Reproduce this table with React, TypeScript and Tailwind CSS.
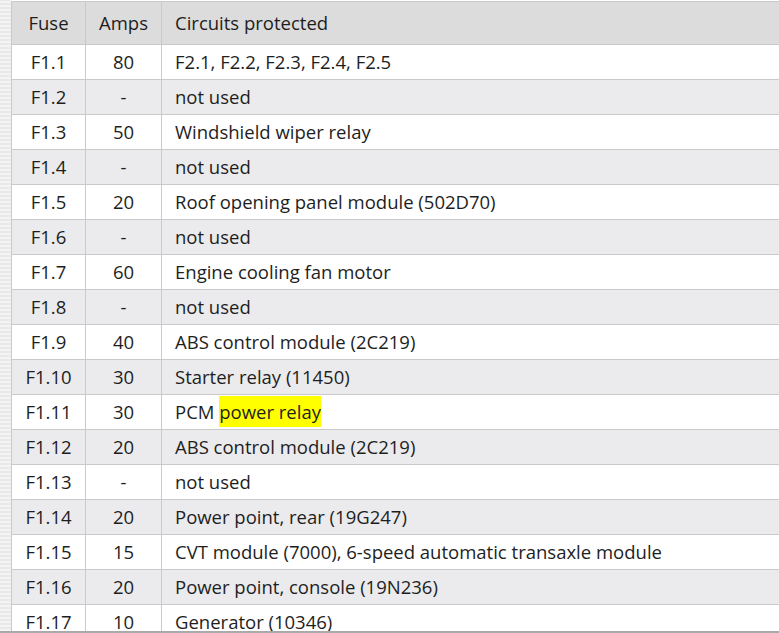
import React from 'react';

type Row = { fuse: string; amps: string; circuit: React.ReactNode };

const rows: Row[] = [
  { fuse: 'F1.1', amps: '80', circuit: 'F2.1, F2.2, F2.3, F2.4, F2.5' },
  { fuse: 'F1.2', amps: '-', circuit: 'not used' },
  { fuse: 'F1.3', amps: '50', circuit: 'Windshield wiper relay' },
  { fuse: 'F1.4', amps: '-', circuit: 'not used' },
  { fuse: 'F1.5', amps: '20', circuit: 'Roof opening panel module (502D70)' },
  { fuse: 'F1.6', amps: '-', circuit: 'not used' },
  { fuse: 'F1.7', amps: '60', circuit: 'Engine cooling fan motor' },
  { fuse: 'F1.8', amps: '-', circuit: 'not used' },
  { fuse: 'F1.9', amps: '40', circuit: 'ABS control module (2C219)' },
  { fuse: 'F1.10', amps: '30', circuit: 'Starter relay (11450)' },
  {
    fuse: 'F1.11',
    amps: '30',
    circuit: (
      <>
        PCM <span className="bg-[#ffff00] py-[3px]">power relay</span>
      </>
    ),
  },
  { fuse: 'F1.12', amps: '20', circuit: 'ABS control module (2C219)' },
  { fuse: 'F1.13', amps: '-', circuit: 'not used' },
  { fuse: 'F1.14', amps: '20', circuit: 'Power point, rear (19G247)' },
  { fuse: 'F1.15', amps: '15', circuit: 'CVT module (7000), 6-speed automatic transaxle module' },
  { fuse: 'F1.16', amps: '20', circuit: 'Power point, console (19N236)' },
  { fuse: 'F1.17', amps: '10', circuit: 'Generator (10346)' },
];

export default function App() {
  return (
    <div className="flex h-[633px] w-[779px] overflow-hidden border-b-2 border-[#a9a9a9] bg-white font-['Open_Sans',sans-serif] text-[18.5px] text-[#1e1e1e]">
      <div className="w-[11px] shrink-0 bg-[repeating-linear-gradient(0deg,#f4f4f4_0px,#f4f4f4_2px,#e9e9e9_2px,#e9e9e9_4px)]" />
      <div className="pt-px">
        <table className="w-[790px] border-collapse">
          <thead>
            <tr className="h-[43px] bg-[#dcdcdc]">
              <th className="w-[74px] border border-[#cacaca] text-center font-normal">Fuse</th>
              <th className="w-[76px] border border-[#cacaca] text-center font-normal">Amps</th>
              <th className="border border-[#cacaca] px-[13px] text-left font-normal">Circuits protected</th>
            </tr>
          </thead>
          <tbody>
            {rows.map((r, i) => (
              <tr key={r.fuse} className={`h-[35px] ${i % 2 === 1 ? 'bg-[#ebebed]' : 'bg-white'}`}>
                <td className="border border-[#cacaca] p-0 text-center">{r.fuse}</td>
                <td className="border border-[#cacaca] p-0 text-center">{r.amps}</td>
                <td className="border border-[#cacaca] px-[13px] py-0 whitespace-nowrap">{r.circuit}</td>
              </tr>
            ))}
          </tbody>
        </table>
      </div>
    </div>
  );
}
